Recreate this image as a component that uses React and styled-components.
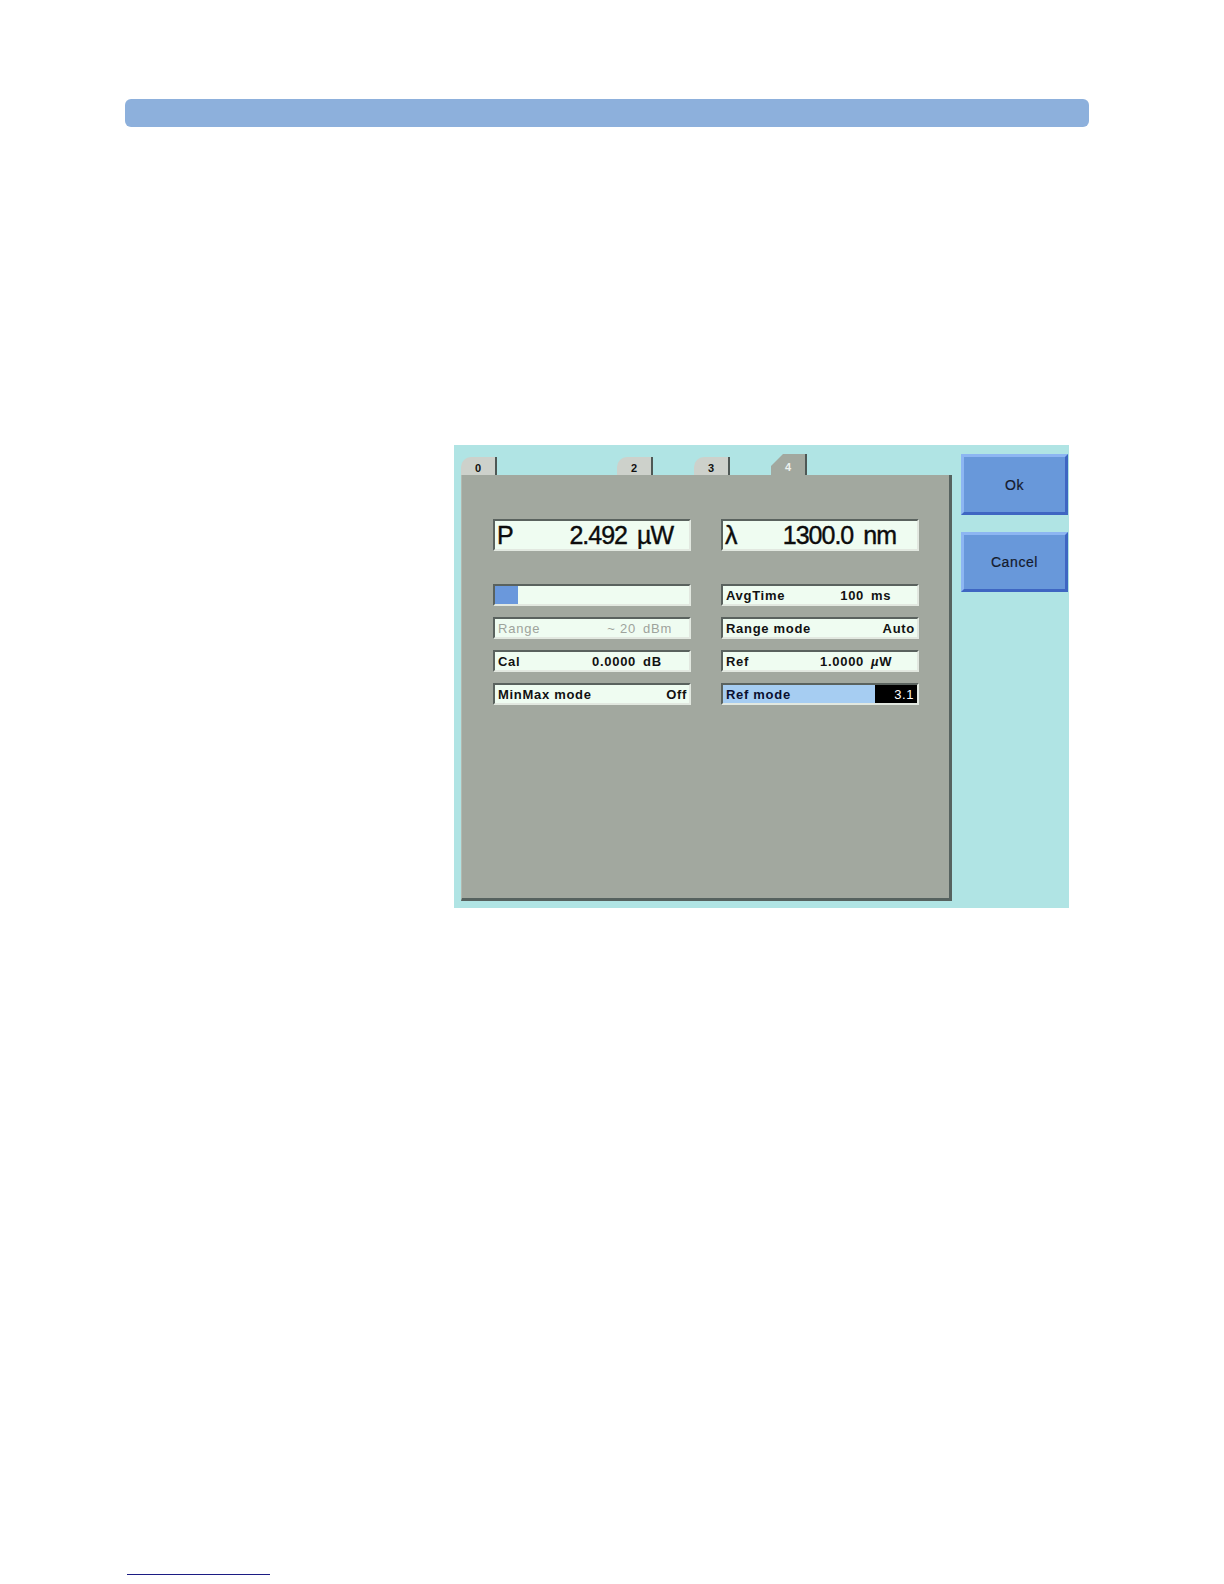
import React from 'react'
import styled, { createGlobalStyle, css } from 'styled-components'

const GlobalStyle = createGlobalStyle`
    body {
        margin: 0;
        background: #ffffff;
        font-family: "Liberation Sans", Arial, sans-serif;
    }
`;

const tabs = [
    { id: '0', gap: 0 },
    { id: '2', gap: 120 },
    { id: '3', gap: 41 },
    { id: '4', gap: 41, active: true },
];

export default function App() {
    return (
        <Page>
            <GlobalStyle />
            <HeaderBar />
            <Screen>
                <Main>
                    <TabRow>
                        {tabs.map((t) => (
                            <Tab key={t.id} $gap={t.gap} $active={t.active}>{t.id}</Tab>
                        ))}
                    </TabRow>
                    <Panel>
                        <BigRow>
                            <BigField>
                                <BigLabel>P</BigLabel>
                                <BigValue>2.492</BigValue>
                                <BigUnit $pad={16}>µW</BigUnit>
                            </BigField>
                            <BigField>
                                <BigLabel>λ</BigLabel>
                                <BigValue>1300.0</BigValue>
                                <BigUnit $pad={21}>nm</BigUnit>
                            </BigField>
                        </BigRow>

                        <Grid>
                            <Field>
                                <BarFill $pct={12} />
                            </Field>
                            <Field>
                                <Label>AvgTime</Label>
                                <Value>100</Value>
                                <Unit>ms</Unit>
                            </Field>

                            <Field $disabled>
                                <Label>Range</Label>
                                <Value>~ 20</Value>
                                <Unit>dBm</Unit>
                            </Field>
                            <Field>
                                <Label>Range mode</Label>
                                <Value $end>Auto</Value>
                            </Field>

                            <Field>
                                <Label>Cal</Label>
                                <Value>0.0000</Value>
                                <Unit>dB</Unit>
                            </Field>
                            <Field>
                                <Label>Ref</Label>
                                <Value>1.0000</Value>
                                <Unit><i>µ</i>W</Unit>
                            </Field>

                            <Field>
                                <Label>MinMax mode</Label>
                                <Value $end>Off</Value>
                            </Field>
                            <Field $selected>
                                <Label>Ref mode</Label>
                                <EditBox>3.1</EditBox>
                            </Field>
                        </Grid>
                    </Panel>
                </Main>
                <Side>
                    <SoftKey>Ok</SoftKey>
                    <SoftKey $tall={60}>Cancel</SoftKey>
                </Side>
            </Screen>
            <FooterRule />
        </Page>
    )
}

const Page = styled.div`
    width: 1224px;
    height: 1584px;
    padding-top: 99px;
    box-sizing: border-box;
    overflow: hidden;
`;

const HeaderBar = styled.div`
    margin-left: 125px;
    width: 964px;
    height: 28px;
    background: #8db0dc;
    border-radius: 6px;
`;

const Screen = styled.div`
    margin-top: 318px;
    margin-left: 454px;
    width: 615px;
    height: 463px;
    box-sizing: border-box;
    padding: 0 1px 7px 7px;
    background: #b0e4e4;
    display: flex;
`;

const Main = styled.div`
    width: 491px;
    display: flex;
    flex-direction: column;
`;

const TabRow = styled.div`
    margin-top: 10px;
    height: 20px;
    display: flex;
    align-items: flex-end;
`;

const Tab = styled.div`
    margin-left: ${(p) => p.$gap}px;
    width: 36px;
    height: 18px;
    box-sizing: border-box;
    border-right: 2px solid #4e5855;
    border-top-left-radius: 10px;
    background: #cdd1cb;
    color: #111111;
    font-size: 11px;
    font-weight: bold;
    display: flex;
    align-items: flex-end;
    justify-content: center;
    padding-bottom: 1px;

    ${(p) => p.$active && css`
        height: 21px;
        border-radius: 0;
        background: #a2a89f;
        color: #eef2ee;
        clip-path: polygon(0 12px, 12px 0, 100% 0, 100% 100%, 0 100%);
        padding-bottom: 2px;
    `}
`;

const Panel = styled.div`
    flex: 1;
    background: #a2a89f;
    border-left: 1px solid #b4b9b0;
    border-right: 3px solid #56625f;
    border-bottom: 3px solid #56625f;
    padding: 44px 0 0 31px;
    display: flex;
    flex-direction: column;
    gap: 33px;
`;

const BigRow = styled.div`
    display: grid;
    grid-template-columns: 198px 198px;
    column-gap: 30px;
    height: 32px;
`;

const Grid = styled.div`
    display: grid;
    grid-template-columns: 198px 198px;
    grid-auto-rows: 22px;
    column-gap: 30px;
    row-gap: 11px;
`;

const fieldFrame = css`
    box-sizing: border-box;
    border-top: 2px solid #5a625e;
    border-left: 2px solid #5a625e;
    border-bottom: 2px solid #e2e8e0;
    border-right: 2px solid #e2e8e0;
    background: #effcf1;
    display: flex;
    align-items: center;
    overflow: hidden;
`;

const BigField = styled.div`
    ${fieldFrame}
    padding-left: 2px;
    color: #0c0c0c;
    font-size: 25px;
    line-height: 1;
    letter-spacing: -1px;
    -webkit-text-stroke: 0.4px #0c0c0c;
`;

const BigLabel = styled.span`
    flex: 1;
`;

const BigValue = styled.span``;

const BigUnit = styled.span`
    margin-left: 10px;
    padding-right: ${(p) => p.$pad}px;
`;

const Field = styled.div`
    ${fieldFrame}
    padding-left: 3px;
    color: #111111;
    font-size: 13px;
    font-weight: bold;
    letter-spacing: 0.7px;

    ${(p) => p.$disabled && css`
        color: #9ea39c;
        font-weight: normal;
        letter-spacing: 0.8px;
    `}

    ${(p) => p.$selected && css`
        background: #a6cdf2;
        color: #0a1030;
    `}
`;

const Label = styled.span`
    flex: 1;
    white-space: nowrap;
`;

const Value = styled.span`
    white-space: nowrap;
    padding-right: ${(p) => (p.$end ? 2 : 0)}px;
`;

const Unit = styled.span`
    width: 46px;
    margin-left: 7px;
    white-space: nowrap;

    i {
        font-style: italic;
    }
`;

const BarFill = styled.div`
    align-self: stretch;
    margin-left: -3px;
    width: ${(p) => p.$pct}%;
    background: #6a98dc;
`;

const EditBox = styled.span`
    align-self: stretch;
    width: 42px;
    background: #000000;
    color: #ffffff;
    font-weight: normal;
    padding-right: 3px;
    box-sizing: border-box;
    display: flex;
    align-items: center;
    justify-content: flex-end;
    letter-spacing: 0.6px;
`;

const Side = styled.div`
    margin-left: 9px;
    margin-top: 9px;
    width: 107px;
    display: flex;
    flex-direction: column;
    gap: 17px;
`;

const SoftKey = styled.div`
    height: ${(p) => p.$tall || 61}px;
    box-sizing: border-box;
    background: #6898da;
    border-top: 3px solid #8db6f2;
    border-left: 3px solid #8db6f2;
    border-bottom: 3px solid #3e66c2;
    border-right: 3px solid #3e66c2;
    display: flex;
    align-items: center;
    justify-content: center;
    color: #141a2c;
    font-size: 14px;
    letter-spacing: 0.6px;
    -webkit-text-stroke: 0.2px #141a2c;
`;

const FooterRule = styled.div`
    margin-top: 666px;
    margin-left: 127px;
    width: 143px;
    height: 1px;
    background: #1c1c84;
`;
